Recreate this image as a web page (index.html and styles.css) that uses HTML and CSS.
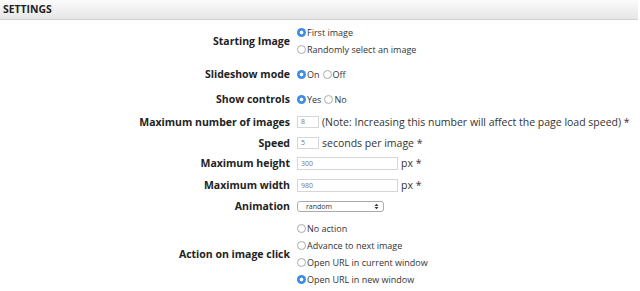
FILE: index.html
```html
<!DOCTYPE html>
<html>
<head>
<meta charset="utf-8">
<link rel="stylesheet" href="styles.css">
</head>
<body>
<div class="header">SETTINGS</div>
<div class="form">
  <div class="label">Starting Image</div>
  <div class="control stack">
    <label class="opt"><span class="radio on"></span>First image</label>
    <label class="opt"><span class="radio"></span>Randomly select an image</label>
  </div>

  <div class="label">Slideshow mode</div>
  <div class="control">
    <label class="opt"><span class="radio on"></span>On</label>
    <label class="opt gap"><span class="radio"></span>Off</label>
  </div>

  <div class="label">Show controls</div>
  <div class="control">
    <label class="opt"><span class="radio on"></span>Yes</label>
    <label class="opt gap"><span class="radio"></span>No</label>
  </div>

  <div class="label">Maximum number of images</div>
  <div class="control">
    <span class="input small">8</span>
    <span class="note">(Note: Increasing this number will affect the page load speed) *</span>
  </div>

  <div class="label">Speed</div>
  <div class="control">
    <span class="input small">5</span>
    <span class="note">seconds per image *</span>
  </div>

  <div class="label">Maximum height</div>
  <div class="control">
    <span class="input wide">300</span>
    <span class="note">px *</span>
  </div>

  <div class="label">Maximum width</div>
  <div class="control">
    <span class="input wide">980</span>
    <span class="note">px *</span>
  </div>

  <div class="label">Animation</div>
  <div class="control">
    <span class="select">random
      <svg class="arrows" width="5" height="7" viewBox="0 0 5 7"><path d="M0.5 3 L2.5 0.8 L4.5 3 Z M0.5 4 L2.5 6.2 L4.5 4 Z" fill="#333"/></svg>
    </span>
  </div>

  <div class="label">Action on image click</div>
  <div class="control stack">
    <label class="opt"><span class="radio"></span>No action</label>
    <label class="opt"><span class="radio"></span>Advance to next image</label>
    <label class="opt"><span class="radio"></span>Open URL in current window</label>
    <label class="opt"><span class="radio on"></span>Open URL in new window</label>
  </div>
</div>
</body>
</html>
```

FILE: styles.css
```css
html, body {
  margin: 0;
  padding: 0;
  background: #fff;
  font-family: "Open Sans", "Liberation Sans", sans-serif;
  color: #333;
}
.header {
  height: 19px;
  margin-right: 2px;
  border-bottom: 1px solid #d0d0d0;
  background: linear-gradient(#fbfbfb, #e6e6e6);
  font-size: 10.4px;
  font-weight: 700;
  color: #222;
  line-height: 19px;
  padding-left: 3px;
}
.form {
  display: grid;
  grid-template-columns: 290px auto;
  grid-template-rows: 38px 28px 22px 24px 18px 22px 22px 20px 76px;
  column-gap: 7px;
  margin-top: 2px;
}
.label {
  align-self: center;
  text-align: right;
  font-size: 10.5px;
  font-weight: 700;
  color: #222;
  white-space: nowrap;
}
.control {
  align-self: center;
  display: flex;
  align-items: center;
  white-space: nowrap;
}
.control.stack {
  flex-direction: column;
  align-items: flex-start;
}
.opt {
  display: flex;
  align-items: center;
  height: 17px;
  font-size: 9px;
  color: #333;
}
.opt.gap {
  margin-left: 3px;
}
.radio {
  box-sizing: border-box;
  width: 9px;
  height: 9px;
  border-radius: 50%;
  border: 1px solid #aaa;
  background: #fff;
  margin-right: 1px;
  flex: none;
}
.radio.on {
  border: none;
  background: radial-gradient(circle, #fff 0 1.6px, #3b8de6 2.2px);
}
.input {
  box-sizing: border-box;
  height: 12px;
  border: 1px solid #d6d6d6;
  font-size: 7px;
  line-height: 10px;
  color: #777;
  padding-left: 3px;
  background: #fff;
}
.input.small { width: 22px; }
.input.wide { width: 101px; height: 13px; line-height: 11px; }
.note {
  font-size: 10.5px;
  color: #333;
  margin-left: 3px;
}
.select {
  box-sizing: border-box;
  width: 87px;
  height: 11px;
  border: 1px solid #aaa;
  border-radius: 3px;
  font-size: 7px;
  line-height: 9px;
  color: #333;
  padding-left: 8px;
  padding-right: 4px;
  display: flex;
  align-items: center;
  justify-content: space-between;
}
```
